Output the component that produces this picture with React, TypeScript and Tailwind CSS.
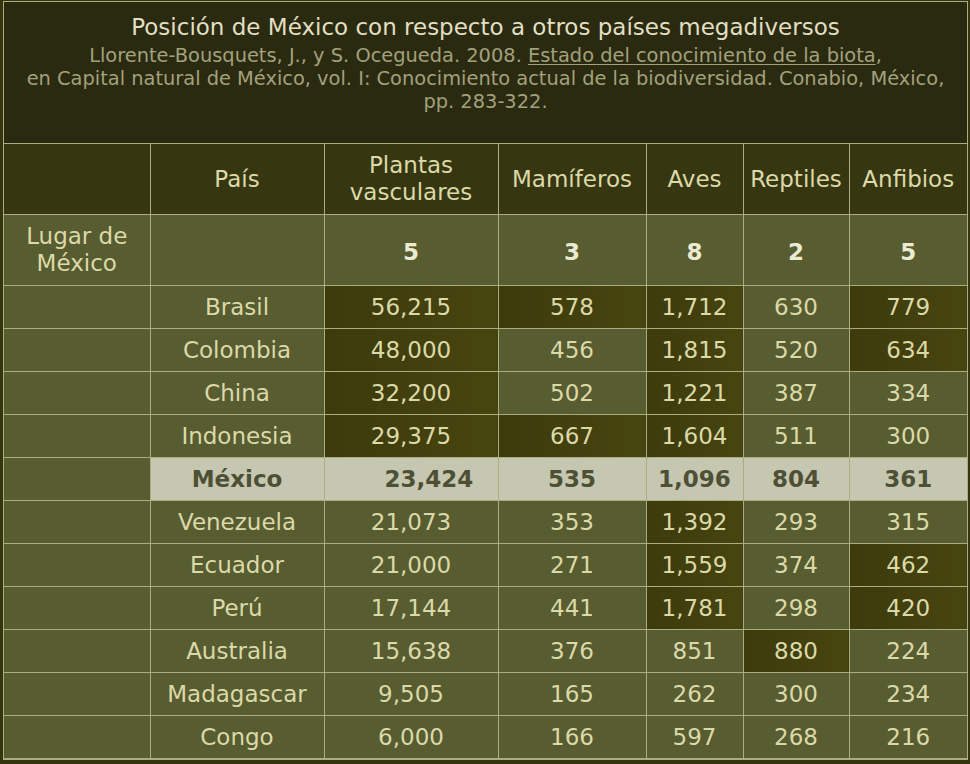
import React from "react";

type Row = {
  pais: string;
  vals: string[];
  dark: boolean[];
};

const rows: Row[] = [
  { pais: "Brasil", vals: ["56,215", "578", "1,712", "630", "779"], dark: [true, true, true, false, true] },
  { pais: "Colombia", vals: ["48,000", "456", "1,815", "520", "634"], dark: [true, false, true, false, true] },
  { pais: "China", vals: ["32,200", "502", "1,221", "387", "334"], dark: [true, false, true, false, false] },
  { pais: "Indonesia", vals: ["29,375", "667", "1,604", "511", "300"], dark: [true, true, true, false, false] },
  { pais: "Venezuela", vals: ["21,073", "353", "1,392", "293", "315"], dark: [false, false, true, false, false] },
  { pais: "Ecuador", vals: ["21,000", "271", "1,559", "374", "462"], dark: [false, false, true, false, true] },
  { pais: "Perú", vals: ["17,144", "441", "1,781", "298", "420"], dark: [false, false, true, false, true] },
  { pais: "Australia", vals: ["15,638", "376", "851", "880", "224"], dark: [false, false, false, true, false] },
  { pais: "Madagascar", vals: ["9,505", "165", "262", "300", "234"], dark: [false, false, false, false, false] },
  { pais: "Congo", vals: ["6,000", "166", "597", "268", "216"], dark: [false, false, false, false, false] },
];

const mexico = ["23,424", "535", "1,096", "804", "361"];
const lugar = ["5", "3", "8", "2", "5"];
const headers = ["Mamíferos", "Aves", "Reptiles", "Anfibios"];

const cell = "border border-[#a9ad80] text-center align-middle";
const darkBg = "bg-gradient-to-r from-[#3d3a0c] to-[#47450f]";
const baseBg = "bg-[#575c31]";

export default function App() {
  return (
    <div className="min-h-[764px] bg-[#34340f] pt-px pl-[3px] font-['DejaVu_Sans',Verdana,sans-serif] text-[#dcd9a8]">
      <div className="w-[965px] border border-[#a9ad80] bg-[#2a2a10]">
        <div className="h-[141px] px-1 pt-[11px] text-center">
          <h1 className="text-[23px] leading-[28px] text-[#e2dfc2]">
            Posición de México con respecto a otros países megadiversos
          </h1>
          <p className="mt-[3px] text-[19.4px] leading-[23px] text-[#a3a17c]">
            Llorente-Bousquets, J., y S. Ocegueda. 2008.{" "}
            <span className="underline underline-offset-2">Estado del conocimiento de la biota</span>,
            <br />
            en Capital natural de México, vol. I: Conocimiento actual de la biodiversidad. Conabio, México,
            <br />
            pp. 283-322.
          </p>
        </div>
        <table className="w-full table-fixed border-collapse text-[23px]">
          <colgroup>
            <col className="w-[146px]" />
            <col className="w-[174px]" />
            <col className="w-[174px]" />
            <col className="w-[148px]" />
            <col className="w-[97px]" />
            <col className="w-[106px]" />
            <col />
          </colgroup>
          <thead>
            <tr className="h-[71px] bg-[#363611] leading-[27px]">
              <th className={`${cell} border-l-0 font-normal`}></th>
              <th className={`${cell} font-normal`}>País</th>
              <th className={`${cell} font-normal`}>
                Plantas
                <br />
                vasculares
              </th>
              {headers.map((h) => (
                <th key={h} className={`${cell} font-normal last:border-r-0`}>
                  {h}
                </th>
              ))}
            </tr>
          </thead>
          <tbody>
            <tr className={`h-[71px] ${baseBg} leading-[27px]`}>
              <td className={`${cell} border-l-0`}>
                Lugar de
                <br />
                México
              </td>
              <td className={cell}></td>
              {lugar.map((v, i) => (
                <td key={i} className={`${cell} pt-1 font-bold text-[#ecead0] last:border-r-0`}>
                  {v}
                </td>
              ))}
            </tr>
            {rows.slice(0, 4).map((r) => (
              <DataRow key={r.pais} row={r} />
            ))}
            <tr className="h-[43px]">
              <td className={`${cell} ${baseBg} border-l-0`}></td>
              <td className={`${cell} border-[#8f9270] bg-[#c5c7b0] font-bold text-[#4e5036]`}>México</td>
              {mexico.map((v, i) => (
                <td
                  key={i}
                  className={`${cell} border-[#8f9270] bg-[#c5c7b0] font-bold text-[#4e5036] last:border-r-0 ${i === 0 ? "pl-[36px]" : ""}`}
                >
                  {v}
                </td>
              ))}
            </tr>
            {rows.slice(4).map((r) => (
              <DataRow key={r.pais} row={r} />
            ))}
          </tbody>
        </table>
      </div>
    </div>
  );
}

function DataRow({ row }: { row: Row }) {
  return (
    <tr className={`h-[43px] ${baseBg}`}>
      <td className={`${cell} border-l-0`}></td>
      <td className={cell}>{row.pais}</td>
      {row.vals.map((v, i) => (
        <td key={i} className={`${cell} last:border-r-0 ${row.dark[i] ? darkBg : ""}`}>
          {v}
        </td>
      ))}
    </tr>
  );
}
